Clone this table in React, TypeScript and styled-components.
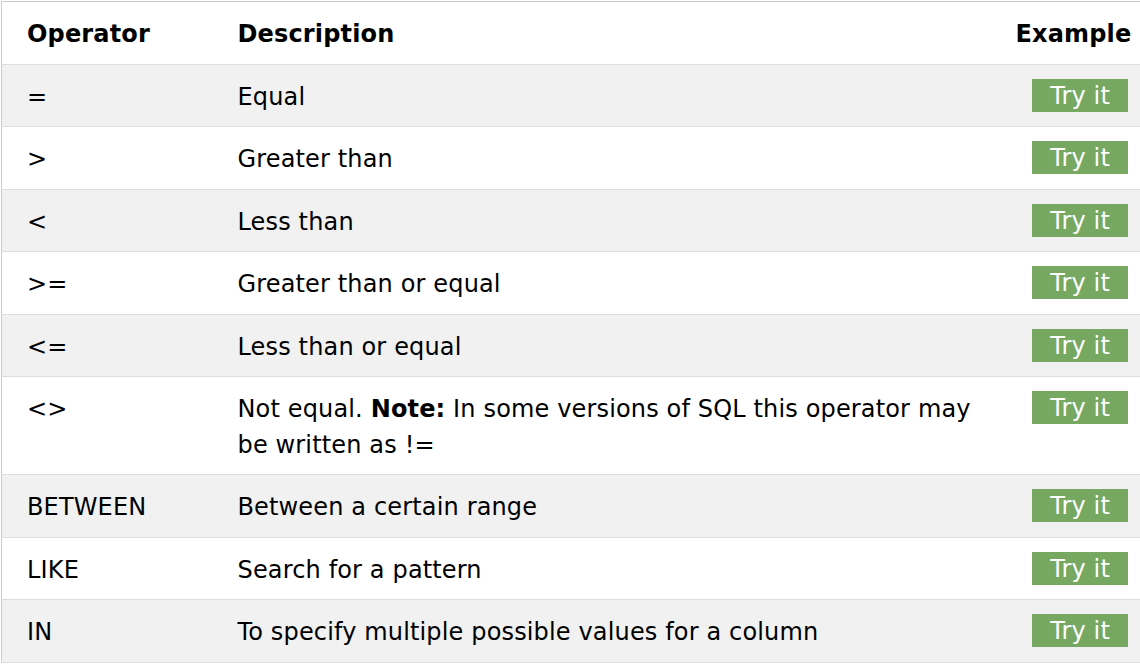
import * as React from 'react';
import styled, { createGlobalStyle } from 'styled-components';

const GlobalStyle = createGlobalStyle`
    html, body {
        margin: 0;
        padding: 0;
        background: #ffffff;
        overflow: hidden;
    }
    body {
        font-family: 'DejaVu Sans', Verdana, sans-serif;
        color: #000000;
    }
`;

const Page = styled.div`
    padding: 1px 0 0 1px;
`;

const Table = styled.table`
    width: 1142px;
    table-layout: fixed;
    border-collapse: collapse;
    border: 1px solid #cccccc;
    font-size: 24px;
    letter-spacing: 0.15px;
    line-height: 35.5px;
`;

const Row = styled.tr<{ $shaded?: boolean }>`
    background: ${(p) => (p.$shaded ? '#f1f1f1' : '#ffffff')};
    border-bottom: 1px solid #dddddd;
`;

const HeadCell = styled.th<{ $align?: 'left' | 'right' }>`
    font-weight: bold;
    text-align: ${(p) => p.$align || 'left'};
    vertical-align: top;
    padding: 15px 13px 11px;
    white-space: nowrap;

    &:first-child {
        padding-left: 25px;
    }
`;

const Cell = styled.td<{ $align?: 'left' | 'right' }>`
    text-align: ${(p) => p.$align || 'left'};
    vertical-align: top;
    padding: 15px 13px 11px;

    &:first-child {
        padding-left: 25px;
    }
    &:last-child {
        padding-right: 14px;
    }
`;

const TryButton = styled.span`
    display: inline-block;
    vertical-align: top;
    margin-top: -1px;
    height: 33px;
    line-height: 34px;
    padding: 0 18px;
    background: #76a862;
    color: #ffffff;
    white-space: nowrap;
`;

type Op = { op: string; desc: React.ReactNode };

const ops: Op[] = [
    { op: '=', desc: 'Equal' },
    { op: '>', desc: 'Greater than' },
    { op: '<', desc: 'Less than' },
    { op: '>=', desc: 'Greater than or equal' },
    { op: '<=', desc: 'Less than or equal' },
    {
        op: '<>',
        desc: (
            <>
                Not equal. <b>Note:</b> In some versions of SQL this operator may be written as !=
            </>
        ),
    },
    { op: 'BETWEEN', desc: 'Between a certain range' },
    { op: 'LIKE', desc: 'Search for a pattern' },
    { op: 'IN', desc: 'To specify multiple possible values for a column' },
];

export default function App() {
    return (
        <Page>
            <GlobalStyle />
            <Table>
                <colgroup>
                    <col style={{ width: 223 }} />
                    <col />
                    <col style={{ width: 140 }} />
                </colgroup>
                <thead>
                    <Row>
                        <HeadCell>Operator</HeadCell>
                        <HeadCell>Description</HeadCell>
                        <HeadCell $align="right">Example</HeadCell>
                    </Row>
                </thead>
                <tbody>
                    {ops.map((o, i) => (
                        <Row key={o.op} $shaded={i % 2 === 0}>
                            <Cell>{o.op}</Cell>
                            <Cell>{o.desc}</Cell>
                            <Cell $align="right">
                                <TryButton>Try it</TryButton>
                            </Cell>
                        </Row>
                    ))}
                </tbody>
            </Table>
        </Page>
    );
}
